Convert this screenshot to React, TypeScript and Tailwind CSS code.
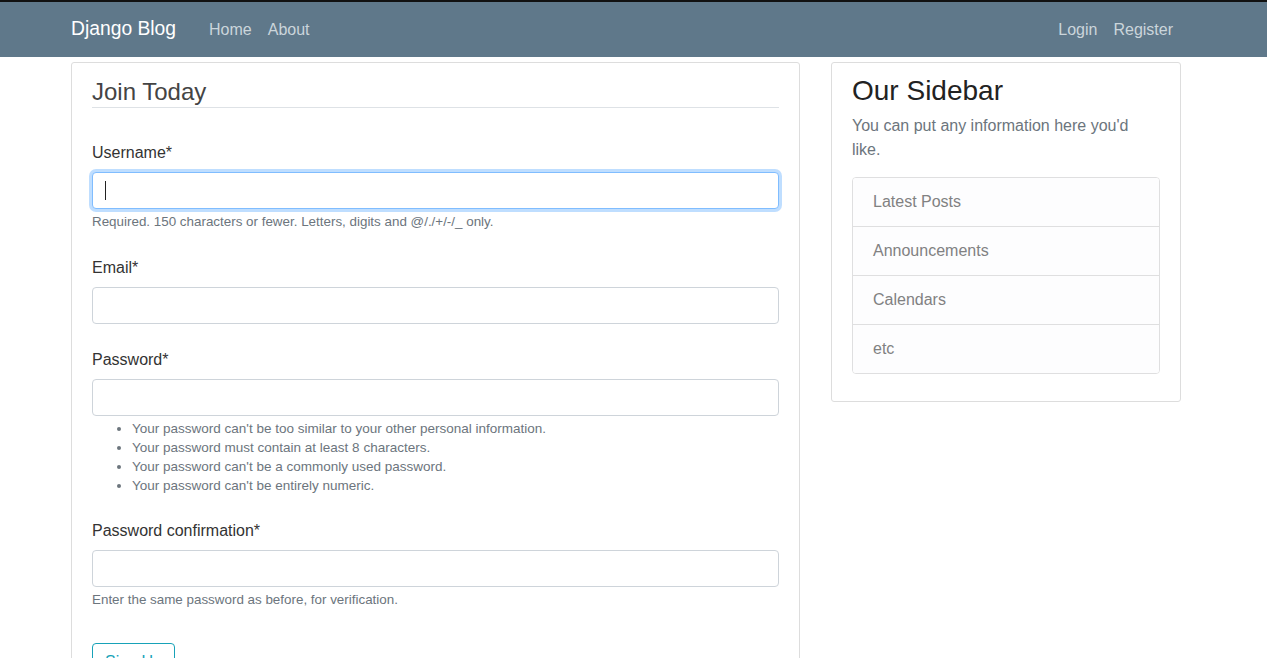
import React from 'react';

const helpClass = "mt-[3px] text-[13.4px] leading-[20px] text-[#6c757d]";
const inputClass = "block h-[37px] w-full rounded-[4px] border border-[#ced4da] bg-white px-3 text-base text-[#495057] outline-none";

const Field = ({ label, type = "text", focused = false, children }: { label: string; type?: string; focused?: boolean; children?: React.ReactNode }) => (
  <div className="mb-[24px]">
    <label className="mb-[7px] block text-base leading-6 text-[#333]">{label}</label>
    {focused ? (
      <div className="relative">
        <input type={type} className="block h-[37px] w-full rounded-[4px] border border-[#80bdff] bg-white px-3 text-base shadow-[0_0_0_3px_rgba(0,123,255,0.25)] outline-none" />
        <span className="absolute left-[13px] top-[9px] h-[19px] w-px bg-[#222]" />
      </div>
    ) : (
      <input type={type} className={inputClass} />
    )}
    {children}
  </div>
);

const sidebarItems = ["Latest Posts", "Announcements", "Calendars", "etc"];

export default function App() {
  return (
    <div className="min-h-screen bg-white font-['Liberation_Sans',Arial,sans-serif] text-[#333]">
      <div className="h-[2px] bg-[#111]" />
      <header className="bg-[#5f788a]">
        <nav className="ml-[71px] flex h-[55px] w-[1110px] items-center">
          <a className="mr-[33px] text-[19.3px] text-white">Django Blog</a>
          <div className="flex gap-4 text-base text-[#cbd5db]">
            <a>Home</a>
            <a>About</a>
          </div>
          <div className="ml-auto mr-2 flex gap-4 text-base text-[#cbd5db]">
            <a>Login</a>
            <a>Register</a>
          </div>
        </nav>
      </header>

      <main className="ml-[71px] flex w-[1110px] items-start gap-[31px] pt-[5px]">
        <div className="w-[729px] rounded-[3px] border border-[#ddd] bg-white px-5 pb-5 pt-[13px]">
          <form>
            <fieldset>
              <legend className="mb-[33px] w-full border-b border-[#dee2e6] text-[24px] leading-[31px] text-[#444]">Join Today</legend>
              <Field label="Username*" focused>
                <div className={helpClass}>Required. 150 characters or fewer. Letters, digits and @/./+/-/_ only.</div>
              </Field>
              <Field label="Email*" type="email" />
              <Field label="Password*" type="password">
                <ul className="mt-[3px] list-disc pl-10 text-[13.5px] leading-[19px] text-[#6c757d]">
                  <li>Your password can't be too similar to your other personal information.</li>
                  <li>Your password must contain at least 8 characters.</li>
                  <li>Your password can't be a commonly used password.</li>
                  <li>Your password can't be entirely numeric.</li>
                </ul>
              </Field>
              <Field label="Password confirmation*" type="password">
                <div className={helpClass}>Enter the same password as before, for verification.</div>
              </Field>
            </fieldset>
            <div className="pt-[9px]">
              <button type="button" className="h-[38px] rounded-[4px] border border-[#17a2b8] px-3 text-base text-[#17a2b8]">Sign Up</button>
            </div>
          </form>
        </div>

        <div className="w-[350px] rounded-[3px] border border-[#ddd] bg-white px-5 pb-[27px] pt-[11px]">
          <h3 className="text-[28px] leading-[34px] text-[#222]">Our Sidebar</h3>
          <p className="mb-[15px] mt-[6px] text-base leading-6 text-[#6c757d]">You can put any information here you'd like.</p>
          <ul className="overflow-hidden rounded-[4px] border border-[#dfdfe0]">
            {sidebarItems.map((item, i) => (
              <li key={item} className={`bg-[#fdfdfe] px-5 py-3 text-base leading-6 text-[#818182] ${i > 0 ? "border-t border-[#dfdfe0]" : ""}`}>
                {item}
              </li>
            ))}
          </ul>
        </div>
      </main>
    </div>
  );
}
